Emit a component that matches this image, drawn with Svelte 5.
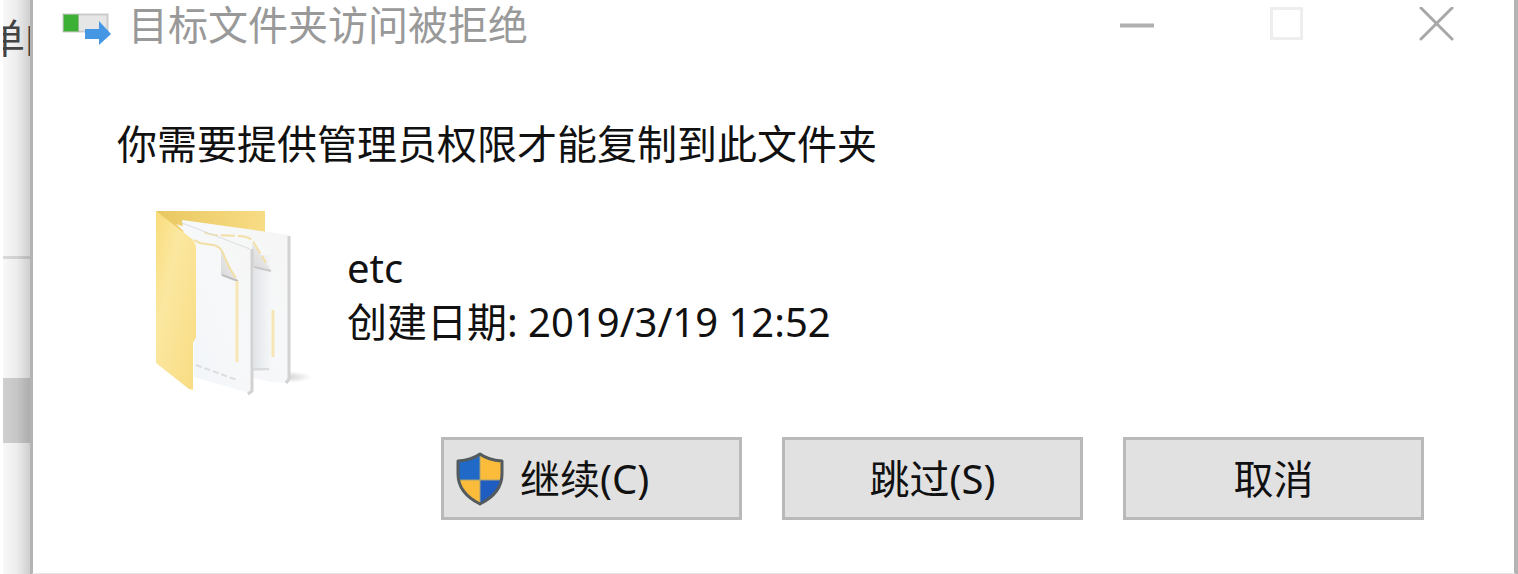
<script>
  const buttons = [
    { label: '继续(C)', shield: true },
    { label: '跳过(S)', shield: false },
    { label: '取消', shield: false }
  ];
</script>

<div class="desktop">
  <div class="behind" aria-hidden="true">
    <div class="under-text"><span>单的</span></div>
    <div class="line"></div>
    <div class="block"></div>
  </div>

  <div class="dialog" role="dialog" aria-labelledby="title">
    <header>
      <svg class="app-icon" width="50" height="36" viewBox="0 0 50 36" aria-hidden="true">
        <rect x="1.5" y="5.5" width="44" height="17" fill="#e6e6e6" stroke="#cccccc" stroke-width="2" />
        <rect x="1.5" y="5.5" width="15" height="17" fill="#3cb034" stroke="#8fbc8a" stroke-width="1" />
        <path d="M23 20H37V12L49 25L37 36V30H23Z" fill="#4597e3" />
      </svg>
      <h1 id="title">目标文件夹访问被拒绝</h1>
      <div class="controls">
        <button aria-label="最小化">
          <svg width="36" height="36" viewBox="0 0 36 36"><path d="M1 18.5H35" stroke="#b0b0b0" stroke-width="4" /></svg>
        </button>
        <button aria-label="最大化" disabled>
          <svg width="36" height="36" viewBox="0 0 36 36"><rect x="2.5" y="1.5" width="30" height="30" fill="none" stroke="#eeeeee" stroke-width="3" /></svg>
        </button>
        <button aria-label="关闭">
          <svg width="36" height="36" viewBox="0 0 36 36"><path d="M2 1L33 32M33 1L2 32" stroke="#a8a8a8" stroke-width="3" stroke-linecap="round" /></svg>
        </button>
      </div>
    </header>

    <main>
      <p class="message">你需要提供管理员权限才能复制到此文件夹</p>

      <div class="item">
        <svg class="folder" width="180" height="210" viewBox="0 0 180 210" aria-hidden="true">
          <defs>
            <linearGradient id="front" x1="0" y1="0" x2="1" y2="1">
              <stop offset="0" stop-color="#f9dc7b" />
              <stop offset=".35" stop-color="#fbe7a0" />
              <stop offset="1" stop-color="#f9dc82" />
            </linearGradient>
            <linearGradient id="back" x1="0" y1="0" x2="1" y2="0">
              <stop offset="0" stop-color="#e9c860" />
              <stop offset="1" stop-color="#f8dc85" />
            </linearGradient>
            <linearGradient id="page" x1="0" y1="1" x2="1" y2="0">
              <stop offset="0" stop-color="#f1f5f9" />
              <stop offset=".6" stop-color="#f7f8f9" />
              <stop offset="1" stop-color="#f5f5f5" />
            </linearGradient>
            <linearGradient id="fold" x1="0" y1="1" x2="1" y2="0">
              <stop offset="0" stop-color="#d8d8d8" />
              <stop offset="1" stop-color="#f3f3f3" />
            </linearGradient>
            <linearGradient id="gap" x1="0" y1="0" x2="1" y2="0">
              <stop offset="0" stop-color="#e2e5e8" />
              <stop offset="1" stop-color="#e2e5e8" stop-opacity="0" />
            </linearGradient>
            <radialGradient id="shade">
              <stop offset="0" stop-color="#cccccc" />
              <stop offset="1" stop-color="#cccccc" stop-opacity="0" />
            </radialGradient>
          </defs>
          <ellipse cx="144" cy="182" rx="28" ry="6" fill="url(#shade)" />
          <path d="M16 16H125V60H60Z" fill="url(#back)" />
          <path d="M42 25L149 40V184L146 188L60 176Z" fill="url(#page)" />
          <path d="M149 41V184L146 188" fill="none" stroke="#d2d2d2" stroke-width="3" />
          <path d="M114 60H132V176H114Z" fill="url(#gap)" />
          <path d="M112 48Q122 60 131 76L113 72Z" fill="url(#fold)" />
          <path d="M64 38L74 40L100 41Q112 42 114 48Q120 58 126 68" fill="none" stroke="#f3dfa5" stroke-width="2" stroke-dasharray="14 3" />
          <path d="M114 72L131 76" stroke="#c8c8c8" stroke-width="2" />
          <path d="M133 115V162" stroke="#f7e6b5" stroke-width="3" />
          <path d="M113 174H129" stroke="#dadada" stroke-width="2" />
          <path d="M36 29L112 54V198L109 198L54 182V46Z" fill="url(#page)" />
          <path d="M42 28L110 54" stroke="#dddddd" stroke-width="1" />
          <path d="M112 54V196L108 199" fill="none" stroke="#d2d2d2" stroke-width="3" />
          <path d="M81 52Q87 66 97 86L81 80Z" fill="url(#fold)" />
          <path d="M54 45L60 48L73 50Q80 51 83 58Q88 72 96 83" fill="none" stroke="#f3dfa5" stroke-width="2" />
          <path d="M82 80L98 86" stroke="#c0c0c0" stroke-width="2" />
          <path d="M97 86V167" stroke="#f7e6b5" stroke-width="3" />
          <path d="M56 170L97 185" stroke="#dcdcdc" stroke-width="2" stroke-dasharray="6 3" />
          <path d="M16 16L52 44Q56 48 56 54V142L53 148V195L49 194L16 168Z" fill="url(#front)" />
        </svg>
        <div class="details">
          <div>etc</div>
          <div>创建日期: 2019/3/19 12:52</div>
        </div>
      </div>
    </main>

    <footer>
      {#each buttons as button}
        <button class="push">
          {#if button.shield}
            <svg class="shield" width="48" height="54" viewBox="0 0 48 54" aria-hidden="true">
              <path d="M24 2Q16 8 2 9V24Q3 41 24 52Z" fill="#2169c6" />
              <path d="M24 2Q32 8 46 9V24Q45 41 24 52Z" fill="#fbbc3c" />
              <path d="M2 28H24V52Q5 42 2 28Z" fill="#fbbc3c" />
              <path d="M46 28H24V52Q43 42 46 28Z" fill="#205dc0" />
              <path d="M24 2V52M2 28H46" stroke="#a5a27a" stroke-width="1" />
              <path d="M24 2Q16 8 2 9V22Q2 41 24 52Q46 41 46 22V9Q32 8 24 2Z" fill="none" stroke="#545b5e" stroke-width="3" stroke-linejoin="round" />
            </svg>
          {/if}
          <span class="caption">{button.label}</span>
        </button>
      {/each}
    </footer>
  </div>
</div>

<style>
  :global(body) {
    margin: 0;
    background: #fff;
  }

  .desktop {
    display: flex;
    padding-left: 3px;
    color: #111;
    font: 40px/54px 'Noto Sans', 'Noto Sans CJK SC', sans-serif;
  }

  .behind {
    flex: 0 0 27px;
    overflow: hidden;
    background: linear-gradient(to right, #f8f8f8, #ededed 50%, #cfcfcf);
  }

  .under-text {
    display: flex;
    height: 256px;
    padding-top: 11px;
    box-sizing: border-box;
    white-space: nowrap;
    color: #444;
  }

  .under-text span {
    margin-left: -18px;
  }

  .line {
    height: 3px;
    background: rgb(0 0 0 / 12%);
  }

  .block {
    height: 65px;
    margin-top: 119px;
    background: rgb(0 0 0 / 16%);
  }

  .dialog {
    flex: 1;
    min-width: 0;
    border: solid #b4b4b4;
    border-width: 0 4px 0 3px;
    border-bottom: 2px solid #e6e6e6;
    background: #fff;
  }

  header {
    display: flex;
    align-items: center;
    height: 50px;
    padding: 0 59px 0 29px;
  }

  .app-icon {
    flex: none;
    margin-top: 4px;
  }

  h1 {
    flex: 1;
    margin: 0 0 0 16px;
    font-size: 40px;
    font-weight: 400;
    color: #999;
  }

  .controls {
    display: flex;
    gap: 114px;
  }

  .controls button {
    display: flex;
    padding: 0;
    border: 0;
    background: none;
  }

  main {
    padding: 67px 80px 0 84px;
  }

  .message {
    margin: 0;
  }

  .item {
    display: flex;
    align-items: flex-start;
    gap: 27px;
    margin-top: 24px;
  }

  .folder {
    flex: none;
    margin-left: 23px;
  }

  .details {
    padding-top: 46px;
  }

  footer {
    display: flex;
    justify-content: flex-end;
    gap: 40px;
    padding: 32px 90px 53px 0;
  }

  .push {
    display: flex;
    align-items: center;
    justify-content: center;
    width: 301px;
    height: 83px;
    padding: 0 12px;
    border: 3px solid #b9b9b9;
    background: #e1e1e1;
    color: #111;
    font: inherit;
  }

  .shield {
    flex: none;
    margin-right: 16px;
  }

  .push:has(.shield) {
    justify-content: flex-start;
  }
</style>
